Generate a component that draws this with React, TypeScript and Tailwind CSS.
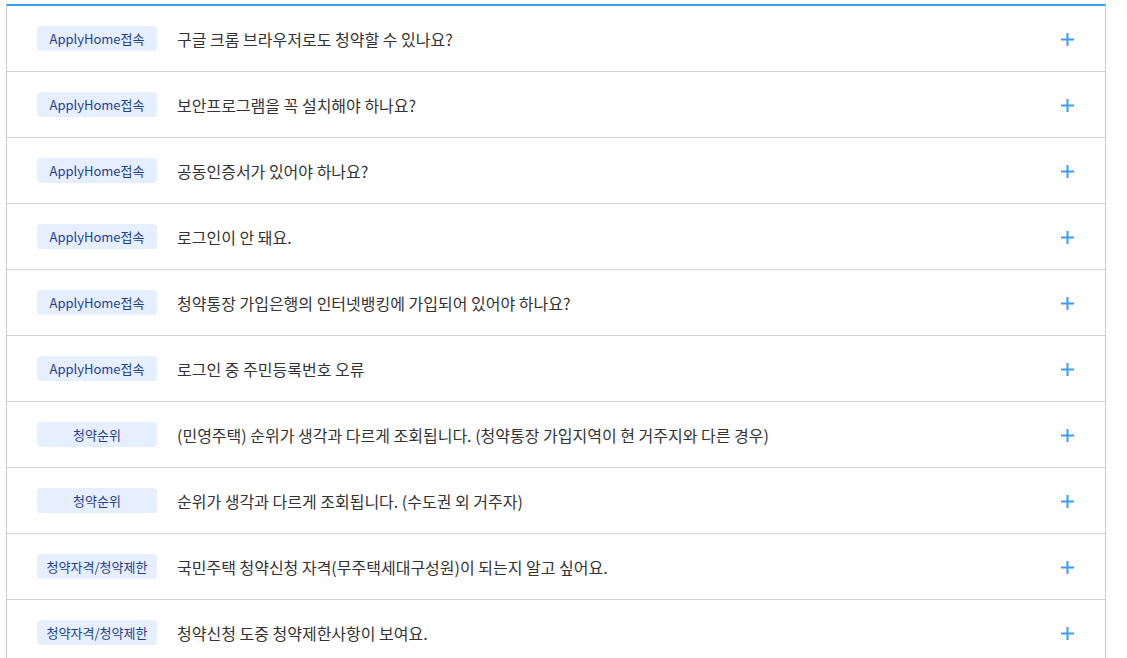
import React from "react";

const items: { tag: string; q: string }[] = [
  { tag: "ApplyHome접속", q: "구글 크롬 브라우저로도 청약할 수 있나요?" },
  { tag: "ApplyHome접속", q: "보안프로그램을 꼭 설치해야 하나요?" },
  { tag: "ApplyHome접속", q: "공동인증서가 있어야 하나요?" },
  { tag: "ApplyHome접속", q: "로그인이 안 돼요." },
  { tag: "ApplyHome접속", q: "청약통장 가입은행의 인터넷뱅킹에 가입되어 있어야 하나요?" },
  { tag: "ApplyHome접속", q: "로그인 중 주민등록번호 오류" },
  { tag: "청약순위", q: "(민영주택) 순위가 생각과 다르게 조회됩니다. (청약통장 가입지역이 현 거주지와 다른 경우)" },
  { tag: "청약순위", q: "순위가 생각과 다르게 조회됩니다. (수도권 외 거주자)" },
  { tag: "청약자격/청약제한", q: "국민주택 청약신청 자격(무주택세대구성원)이 되는지 알고 싶어요." },
  { tag: "청약자격/청약제한", q: "청약신청 도중 청약제한사항이 보여요." },
];

function Plus() {
  return (
    <svg width="13" height="13" viewBox="0 0 13 13" className="mt-[2px] shrink-0">
      <rect x="5.5" y="0" width="2" height="13" fill="#3d9bf2" />
      <rect x="0" y="5.5" width="13" height="2" fill="#3d9bf2" />
    </svg>
  );
}

export default function App() {
  return (
    <div
      className="min-h-screen bg-white pl-[6px] pt-[4px]"
      style={{ fontFamily: '"Noto Sans CJK KR", "Noto Sans", sans-serif' }}
    >
      <div className="w-[1100px] border-t-2 border-t-[#3a9ff0] border-x border-x-[#cccccc]">
        {items.map((it, i) => (
          <div
            key={i}
            className="flex h-[66px] items-center border-b border-[#d2d2d2] pl-[30px] pr-[31px]"
          >
            <span className="flex h-[25px] w-[120px] shrink-0 items-center justify-center rounded-[4px] bg-[#e6efff] text-[13px] text-[#1f3f8c]">
              {it.tag}
            </span>
            <span className="ml-[20px] flex-1 text-[16px] text-[#333333]">{it.q}</span>
            <Plus />
          </div>
        ))}
      </div>
    </div>
  );
}
